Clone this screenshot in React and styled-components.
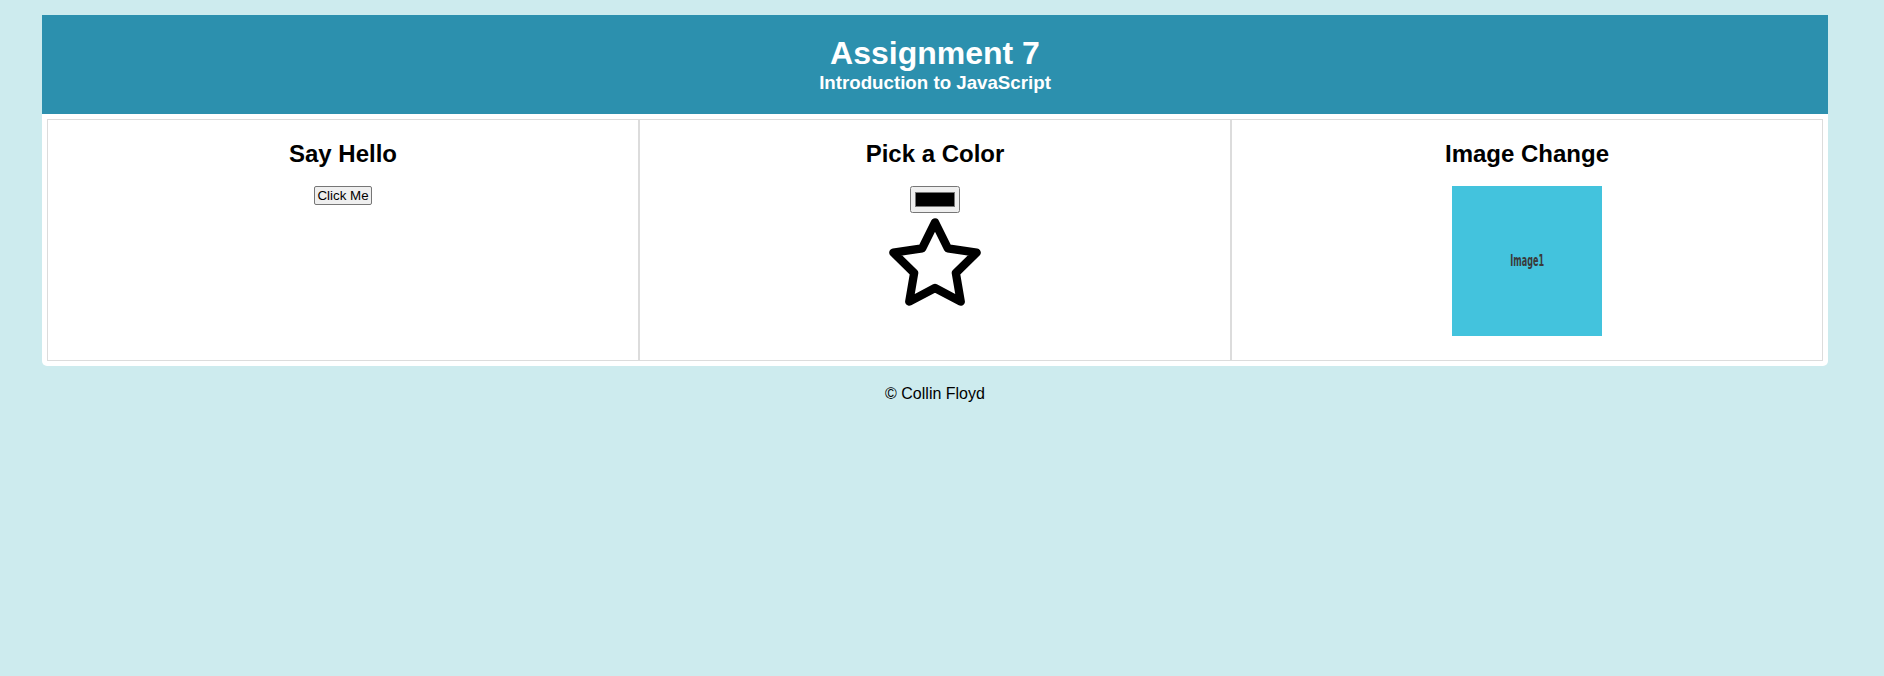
import React from "react";
import styled, { createGlobalStyle } from "styled-components";

const GlobalStyle = createGlobalStyle`
  html, body {
    margin: 0;
    padding: 0;
    background: #cdebee;
    font-family: "Liberation Sans", Arial, sans-serif;
    font-size: 16px;
    color: #000;
  }
`;

const Wrapper = styled.div`
  width: 1786px;
  margin: 15px 0 0 42px;
`;

const Header = styled.header`
  background: #2c90ae;
  color: #fff;
  text-align: center;
  padding: 20px 0 20px;
`;

const Title = styled.h1`
  margin: 0;
  font-size: 32px;
  font-weight: bold;
`;

const Subtitle = styled.h3`
  margin: 0;
  font-size: 18.72px;
  font-weight: bold;
`;

const Main = styled.main`
  background: #fff;
  padding: 5px;
  border-radius: 0 0 5px 5px;
  display: grid;
  grid-template-columns: repeat(3, 1fr);
`;

const Cell = styled.section`
  border: 1px solid #dcdcdc;
  display: flex;
  flex-direction: column;
  align-items: center;
  padding-bottom: 24px;
`;

const CellTitle = styled.h2`
  margin: 20px 0 18px;
  font-size: 24px;
  font-weight: bold;
  line-height: normal;
`;

const Button = styled.button`
  font-family: "Liberation Sans", Arial, sans-serif;
  font-size: 13.333px;
  line-height: normal;
  padding: 1px 2px;
  border: 1px solid #767676;
  border-radius: 2px;
  background: #efefef;
  color: #000;
`;

const ColorInput = styled.input`
  width: 50px;
  height: 27px;
  margin: 0;
`;

const StarSvg = styled.svg`
  display: block;
  width: 100px;
  height: 100px;
  margin-top: 1px;
`;

const ImageBox = styled.div`
  width: 150px;
  height: 150px;
  background: #43c3dd;
  display: flex;
  align-items: center;
  justify-content: center;
`;

const ImageLabel = styled.span`
  font-family: "DejaVu Sans Condensed", "DejaVu Sans", sans-serif;
  font-stretch: condensed;
  font-weight: bold;
  font-size: 15px;
  color: #3a3a3a;
  transform: scaleX(0.6);
  display: inline-block;
`;

const Footer = styled.footer`
  text-align: center;
  margin-top: 19px;
  line-height: normal;
`;

function Star() {
  return (
    <StarSvg viewBox="0 0 24 24" fill="none" stroke="#000" strokeWidth="2" strokeLinecap="round" strokeLinejoin="round">
      <polygon points="12 2 15.09 8.26 22 9.27 17 14.14 18.18 21.02 12 17.77 5.82 21.02 7 14.14 2 9.27 8.91 8.26 12 2" />
    </StarSvg>
  );
}

export default function App() {
  return (
    <>
      <GlobalStyle />
      <Wrapper>
        <Header>
          <Title>Assignment 7</Title>
          <Subtitle>Introduction to JavaScript</Subtitle>
        </Header>
        <Main>
          <Cell>
            <CellTitle>Say Hello</CellTitle>
            <Button type="button">Click Me</Button>
          </Cell>
          <Cell>
            <CellTitle>Pick a Color</CellTitle>
            <ColorInput type="color" defaultValue="#000000" />
            <Star />
          </Cell>
          <Cell>
            <CellTitle>Image Change</CellTitle>
            <ImageBox>
              <ImageLabel>Image1</ImageLabel>
            </ImageBox>
          </Cell>
        </Main>
        <Footer>© Collin Floyd</Footer>
      </Wrapper>
    </>
  );
}
